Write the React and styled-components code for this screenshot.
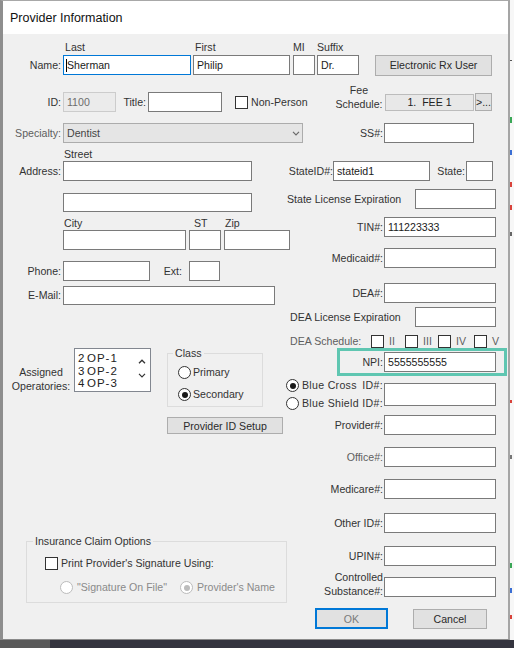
import styled, { createGlobalStyle } from "styled-components";

const GlobalStyle = createGlobalStyle`
  html, body {
    margin: 0;
    padding: 0;
    width: 514px;
    height: 648px;
    overflow: hidden;
    background: #34343f;
  }
  body {
    font-family: "Liberation Sans", Arial, sans-serif;
  }
  * {
    box-sizing: border-box;
  }
`;

const Screen = styled.div`
  width: 514px;
  height: 648px;
  display: flex;
  flex-direction: column;
`;

const Top = styled.div`
  display: flex;
  height: 640px;
  flex: none;
`;

const Window = styled.div`
  width: 510px;
  height: 640px;
  flex: none;
  display: flex;
  flex-direction: column;
  background: #f0f0f0;
  border-left: 3px solid #8e8e8e;
  border-top: 1px solid #a8a8a8;
  border-right: 2px solid #a5a5a5;
  border-bottom: 1px solid #8a8a8a;
`;

const TitleBar = styled.div`
  height: 33px;
  flex: none;
  background: #fff;
  display: flex;
  align-items: center;
  padding-left: 7px;
  font-size: 12.5px;
  color: #111;
`;

const RightStrip = styled.div`
  flex: 1;
  background: #f7f7f7;
  display: flex;
  flex-direction: column;
`;

const Mark = styled.span`
  flex: none;
  width: 2px;
  height: ${(p) => p.$h}px;
  margin-top: ${(p) => p.$mt}px;
  background: ${(p) => p.$c};
`;

const BottomStrip = styled.div`
  flex: 1;
  display: flex;
`;

const Ground = styled.div`
  width: ${(p) => (p.$w ? `${p.$w}px` : "auto")};
  flex: ${(p) => (p.$w ? "none" : 1)};
  background: ${(p) => p.$c};
`;

const Body = styled.div`
  flex: 1;
  display: flex;
  flex-direction: column;
  font-size: 10.6px;
  color: #333;
`;

const Row = styled.div`
  display: flex;
  align-items: ${(p) => p.$align || "center"};
  height: ${(p) => p.$h}px;
  margin-top: ${(p) => p.$mt || 0}px;
  margin-left: ${(p) => p.$ml || 0}px;
  flex: none;
`;

const Label = styled.span`
  flex: none;
  width: ${(p) => p.$w}px;
  margin-left: ${(p) => p.$ml || 0}px;
  text-align: ${(p) => (p.$left ? "left" : "right")};
  white-space: nowrap;
  line-height: 13px;
  color: ${(p) => (p.$dim ? "#5e5e5e" : "inherit")};
`;

const FeeLabel = styled.span`
  flex: none;
  width: 50px;
  height: 28px;
  align-self: flex-end;
  margin-bottom: 1px;
  line-height: 14px;
  text-align: center;
`;

const TwoLineLabel = styled.span`
  flex: none;
  width: ${(p) => p.$w}px;
  line-height: 13.5px;
  text-align: right;
  white-space: nowrap;
`;

const TextBox = styled.div`
  flex: none;
  width: ${(p) => p.$w}px;
  height: ${(p) => p.$h || 20}px;
  margin-left: ${(p) => p.$ml || 0}px;
  margin-top: ${(p) => p.$mt || 0}px;
  margin-bottom: ${(p) => p.$mb || 0}px;
  border: 1px solid
    ${(p) => (p.$focus ? "#0078d7" : p.$disabled ? "#cccccc" : "#7a7a7a")};
  background: ${(p) => (p.$disabled ? "#ebebeb" : "#fff")};
  color: ${(p) => (p.$disabled ? "#6d6d6d" : "#1a1a1a")};
  padding-left: ${(p) => (p.$focus ? 2 : 3)}px;
  display: flex;
  align-items: center;
  white-space: nowrap;
  overflow: hidden;
`;

const Caret = styled.span`
  width: 1px;
  height: 13px;
  background: #000;
  flex: none;
`;

const FeeBox = styled.div`
  flex: none;
  width: 89px;
  height: 17px;
  margin-left: 1px;
  border: 1px solid #bcbcbc;
  background: #e8e8e8;
  display: flex;
  align-items: center;
  justify-content: center;
  white-space: pre;
  color: #222;
`;

const Select = styled.div`
  flex: none;
  width: ${(p) => p.$w}px;
  height: 20px;
  margin-left: ${(p) => p.$ml || 0}px;
  border: 1px solid #acacac;
  background: #e5e5e5;
  display: flex;
  align-items: center;
  justify-content: space-between;
  padding: 0 2px 0 3px;
  color: #444;
`;

const Button = styled.button`
  flex: none;
  width: ${(p) => p.$w}px;
  height: ${(p) => p.$h}px;
  margin-left: ${(p) => p.$ml || 0}px;
  padding: 0;
  border: ${(p) => (p.$default ? "2px solid #0078d7" : "1px solid #adadad")};
  background: #e1e1e1;
  font-family: inherit;
  font-size: 10.6px;
  color: ${(p) => (p.$default ? "#7a7a7a" : "#2a2a2a")};
  display: flex;
  align-items: center;
  justify-content: center;
  white-space: nowrap;
`;

const Checkbox = styled.span`
  flex: none;
  width: 13px;
  height: 13px;
  margin-left: ${(p) => p.$ml || 0}px;
  border: 1px solid #333;
  background: #fff;
`;

const Radio = styled.span`
  flex: none;
  width: 13px;
  height: 13px;
  border-radius: 50%;
  border: 1px solid ${(p) => (p.$disabled ? "#bcbcbc" : "#333")};
  background: #fff;
  display: flex;
  align-items: center;
  justify-content: center;

  &::after {
    content: "";
    width: 6px;
    height: 6px;
    border-radius: 50%;
    background: ${(p) => (p.$disabled ? "#bcbcbc" : "#1a1a1a")};
    display: ${(p) => (p.$checked ? "block" : "none")};
  }
`;

const OptionLine = styled.div`
  display: flex;
  align-items: center;
  flex: none;
  height: 13px;
  width: ${(p) => (p.$w ? `${p.$w}px` : "auto")};
  margin-top: ${(p) => p.$mt || 0}px;
  margin-left: ${(p) => p.$ml || 0}px;
  color: ${(p) => (p.$disabled ? "#8a8a8a" : "inherit")};
  white-space: nowrap;
`;

const OptText = styled.span`
  margin-left: ${(p) => p.$ml || 2}px;
  color: ${(p) => (p.$dim ? "#5e5e5e" : "inherit")};
  line-height: 13px;
`;

const Columns = styled.div`
  display: grid;
  grid-template-columns: 283px 1fr;
  margin-top: 5px;
`;

const Column = styled.div`
  display: flex;
  flex-direction: column;
  padding-top: ${(p) => p.$pt || 0}px;
  min-width: 0;
`;

const OpsRow = styled.div`
  display: flex;
  align-items: flex-start;
  margin-top: 42px;
`;

const OpsLabel = styled.span`
  flex: none;
  width: 66px;
  margin-left: 5px;
  margin-top: 18px;
  line-height: 14px;
  text-align: center;
`;

const ListBox = styled.div`
  flex: none;
  width: 77px;
  height: 44px;
  margin-top: 1px;
  border: 1px solid #828790;
  background: #fff;
  display: flex;
  overflow: hidden;
`;

const ListItems = styled.div`
  flex: 1;
  padding: 3px 0 0 3px;
  font-size: 11.5px;
  line-height: 12.5px;
  letter-spacing: 1px;
  color: #222;
`;

const ListItem = styled.div`
  display: flex;
  white-space: nowrap;
`;

const ListNum = styled.span`
  width: 9px;
  flex: none;
`;

const ScrollCol = styled.div`
  width: 17px;
  flex: none;
  display: flex;
  flex-direction: column;
  align-items: center;
  padding-top: 10px;
  gap: 9px;
`;

const GroupBox = styled.fieldset`
  flex: none;
  width: ${(p) => p.$w}px;
  margin: ${(p) => p.$mt || 0}px 0 0 ${(p) => p.$ml || 0}px;
  min-width: 0;
  border: 1px solid #dcdcdc;
  padding: ${(p) => p.$pad};
  display: flex;
  flex-direction: column;
`;

const Legend = styled.legend`
  padding: 0 2px;
  margin-left: ${(p) => p.$ml}px;
  font-size: 10.6px;
  line-height: 12px;
  color: #333;
`;

const NpiBox = styled.div`
  flex: none;
  display: flex;
  align-items: center;
  width: 170px;
  height: 28px;
  margin-left: 51px;
  border: 3px solid #5fc6b1;
`;

const BlueRow = styled.div`
  display: flex;
  align-items: flex-start;
  height: 31px;
  margin-top: 3px;
  flex: none;
`;

const RadioStack = styled.div`
  width: 97px;
  flex: none;
  display: flex;
  flex-direction: column;
`;

const Spread = styled.span`
  flex: 1;
  display: flex;
  justify-content: space-between;
  padding-left: 3px;
  letter-spacing: 0.3px;
  white-space: nowrap;
  line-height: 13px;
`;

const ChevronUp = () => (
  <svg width="8" height="5" viewBox="0 0 8 5">
    <path d="M1 4.2 L4 1.2 L7 4.2" fill="none" stroke="#333" strokeWidth="1.3" />
  </svg>
);

const ChevronDown = ({ color = "#333" }) => (
  <svg width="8" height="5" viewBox="0 0 8 5">
    <path d="M1 0.8 L4 3.8 L7 0.8" fill="none" stroke={color} strokeWidth="1.2" />
  </svg>
);

const Field = ({ label, value, mt, dim }) => (
  <Row $h={20} $mt={mt}>
    <Label $w={97} $dim={dim}>
      {label}
    </Label>
    <TextBox $w={112} $ml={1}>
      {value}
    </TextBox>
  </Row>
);

const marks = [
  { mt: 60, h: 1, c: "#555" },
  { mt: 56, h: 6, c: "#3aa757" },
  { mt: 27, h: 5, c: "#3b6fd4" },
  { mt: 27, h: 5, c: "#d9433b" },
  { mt: 18, h: 5, c: "#d9433b" },
  { mt: 22, h: 4, c: "#666" },
  { mt: 164, h: 3, c: "#d9433b" },
  { mt: 52, h: 4, c: "#777" },
  { mt: 104, h: 5, c: "#3aa757" },
  { mt: 20, h: 5, c: "#3b6fd4" },
  { mt: 22, h: 4, c: "#d9433b" },
];

const operatories = [
  ["2", "OP-1"],
  ["3", "OP-2"],
  ["4", "OP-3"],
];

const schedules = [
  ["II", 34],
  ["III", 33],
  ["IV", 36],
  ["V", 20],
];

function App() {
  return (
    <>
      <GlobalStyle />
      <Screen>
        <Top>
          <Window>
            <TitleBar>Provider Information</TitleBar>
            <Body>
              <Row $h={13} $mt={7}>
                <Label $left $w={130} $ml={62}>Last</Label>
                <Label $left $w={98}>First</Label>
                <Label $left $w={24}>MI</Label>
                <Label $left $w={40}>Suffix</Label>
              </Row>
              <Row $h={20} $mt={1}>
                <Label $w={58}>Name:</Label>
                <TextBox $w={128} $ml={2} $focus>
                  <Caret />
                  Sherman
                </TextBox>
                <TextBox $w={97} $ml={2}>Philip</TextBox>
                <TextBox $w={22} $ml={3} />
                <TextBox $w={42} $ml={2}>Dr.</TextBox>
                <Button $w={117} $h={21} $ml={16}>Electronic Rx User</Button>
              </Row>

              <Row $h={20} $mt={17}>
                <Label $w={58}>ID:</Label>
                <TextBox $w={53} $ml={2} $disabled>1100</TextBox>
                <Label $w={30}>Title:</Label>
                <TextBox $w={74} $ml={2} />
                <Checkbox $ml={13} />
                <Label $left $w={83} $ml={3}>Non-Person</Label>
                <FeeLabel>
                  Fee
                  <br />
                  Schedule:
                </FeeLabel>
                <FeeBox>{"1.  FEE 1"}</FeeBox>
                <Button $w={17} $h={18} $ml={1}>&gt;...</Button>
              </Row>

              <Row $h={20} $mt={11}>
                <Label $w={58} $dim>Specialty:</Label>
                <Select $w={240} $ml={2}>
                  Dentist
                  <ChevronDown color="#6a6a6a" />
                </Select>
                <Label $w={80}>SS#:</Label>
                <TextBox $w={90} $ml={1} />
              </Row>

              <Columns>
                <Column>
                  <Row $h={13}>
                    <Label $left $w={60} $ml={61}>Street</Label>
                  </Row>
                  <Row $h={20}>
                    <Label $w={58}>Address:</Label>
                    <TextBox $w={189} $ml={2} />
                  </Row>
                  <Row $h={19} $mt={12}>
                    <TextBox $w={189} $h={19} $ml={60} />
                  </Row>
                  <Row $h={13} $mt={5}>
                    <Label $left $w={130} $ml={61}>City</Label>
                    <Label $left $w={31}>ST</Label>
                    <Label $left $w={30}>Zip</Label>
                  </Row>
                  <Row $h={20}>
                    <TextBox $w={123} $ml={60} />
                    <TextBox $w={32} $ml={3} />
                    <TextBox $w={66} $ml={3} />
                  </Row>
                  <Row $h={20} $mt={11}>
                    <Label $w={58}>Phone:</Label>
                    <TextBox $w={87} $ml={2} />
                    <Label $w={32}>Ext:</Label>
                    <TextBox $w={31} $ml={7} />
                  </Row>
                  <Row $h={19} $mt={5}>
                    <Label $w={58}>E-Mail:</Label>
                    <TextBox $w={212} $h={19} $ml={2} />
                  </Row>

                  <OpsRow>
                    <OpsLabel>
                      Assigned
                      <br />
                      Operatories:
                    </OpsLabel>
                    <ListBox>
                      <ListItems>
                        {operatories.map(([n, name]) => (
                          <ListItem key={n}>
                            <ListNum>{n}</ListNum>
                            {name}
                          </ListItem>
                        ))}
                      </ListItems>
                      <ScrollCol>
                        <ChevronUp />
                        <ChevronDown />
                      </ScrollCol>
                    </ListBox>
                    <GroupBox $w={96} $ml={16} $pad="7px 0 5px 10px">
                      <Legend $ml={-5}>Class</Legend>
                      <OptionLine>
                        <Radio />
                        <OptText>Primary</OptText>
                      </OptionLine>
                      <OptionLine $mt={9}>
                        <Radio $checked />
                        <OptText>Secondary</OptText>
                      </OptionLine>
                    </GroupBox>
                  </OpsRow>

                  <Row $h={17} $mt={10}>
                    <Button $w={116} $h={17} $ml={164}>Provider ID Setup</Button>
                  </Row>

                  <GroupBox $w={261} $ml={23} $mt={101} $pad="10px 0 8px 18px">
                    <Legend $ml={-12}>Insurance Claim Options</Legend>
                    <OptionLine>
                      <Checkbox />
                      <OptText $ml={3}>Print Provider's Signature Using:</OptText>
                    </OptionLine>
                    <OptionLine $mt={11}>
                      <OptionLine $w={120} $ml={15} $disabled>
                        <Radio $disabled />
                        <OptText $ml={4}>"Signature On File"</OptText>
                      </OptionLine>
                      <OptionLine $disabled>
                        <Radio $disabled $checked />
                        <OptText $ml={4}>Provider's Name</OptText>
                      </OptionLine>
                    </OptionLine>
                  </GroupBox>
                </Column>

                <Column $pt={13}>
                  <Row $h={20}>
                    <Label $w={47}>StateID#:</Label>
                    <TextBox $w={97}>stateid1</TextBox>
                    <Label $w={35}>State:</Label>
                    <TextBox $w={27} $ml={1} />
                  </Row>
                  <Row $h={20} $mt={8}>
                    <Label $left $w={128} $ml={1}>State License Expiration</Label>
                    <TextBox $w={81} />
                  </Row>
                  <Field mt={8} label="TIN#:" value="111223333" />
                  <Field mt={11} label="Medicaid#:" />
                  <Field mt={15} label="DEA#:" />
                  <Row $h={20} $mt={4}>
                    <Label $left $w={125} $ml={4}>DEA License Expiration</Label>
                    <TextBox $w={81} />
                  </Row>
                  <Row $h={13} $mt={8}>
                    <Label $left $w={81} $ml={4} $dim>DEA Schedule:</Label>
                    {schedules.map(([s, w]) => (
                      <OptionLine key={s} $w={w}>
                        <Checkbox />
                        <OptText $ml={5} $dim>{s}</OptText>
                      </OptionLine>
                    ))}
                  </Row>
                  <NpiBox>
                    <Label $w={43}>NPI:</Label>
                    <TextBox $w={112} $ml={1}>5555555555</TextBox>
                  </NpiBox>
                  <BlueRow>
                    <RadioStack>
                      <OptionLine>
                        <Radio $checked />
                        <Spread>
                          <span>Blue Cross</span>
                          <span>ID#:</span>
                        </Spread>
                      </OptionLine>
                      <OptionLine $mt={5}>
                        <Radio />
                        <Spread>
                          <span>Blue Shield</span>
                          <span>ID#:</span>
                        </Spread>
                      </OptionLine>
                    </RadioStack>
                    <TextBox $w={112} $h={23} $ml={1} $mt={4} />
                  </BlueRow>
                  <Field mt={5} label="Provider#:" />
                  <Field mt={12} label="Office#:" dim />
                  <Field mt={12} label="Medicare#:" />
                  <Field mt={14} label="Other ID#:" />
                  <Field mt={13} label="UPIN#:" />
                  <Row $h={26} $mt={6} $align="flex-end">
                    <TwoLineLabel $w={97}>
                      Controlled
                      <br />
                      Substance#:
                    </TwoLineLabel>
                    <TextBox $w={112} $ml={1} $mb={1} />
                  </Row>
                  <Row $h={21} $mt={10}>
                    <Button $w={73} $h={21} $ml={29} $default>OK</Button>
                    <Button $w={74} $h={20} $ml={25}>Cancel</Button>
                  </Row>
                </Column>
              </Columns>
            </Body>
          </Window>
          <RightStrip>
            {marks.map((m, i) => (
              <Mark key={i} $mt={m.mt} $h={m.h} $c={m.c} />
            ))}
          </RightStrip>
        </Top>
        <BottomStrip>
          <Ground $w={50} $c="#595959" />
          <Ground $c="#34343f" />
        </BottomStrip>
      </Screen>
    </>
  );
}

export default App;
